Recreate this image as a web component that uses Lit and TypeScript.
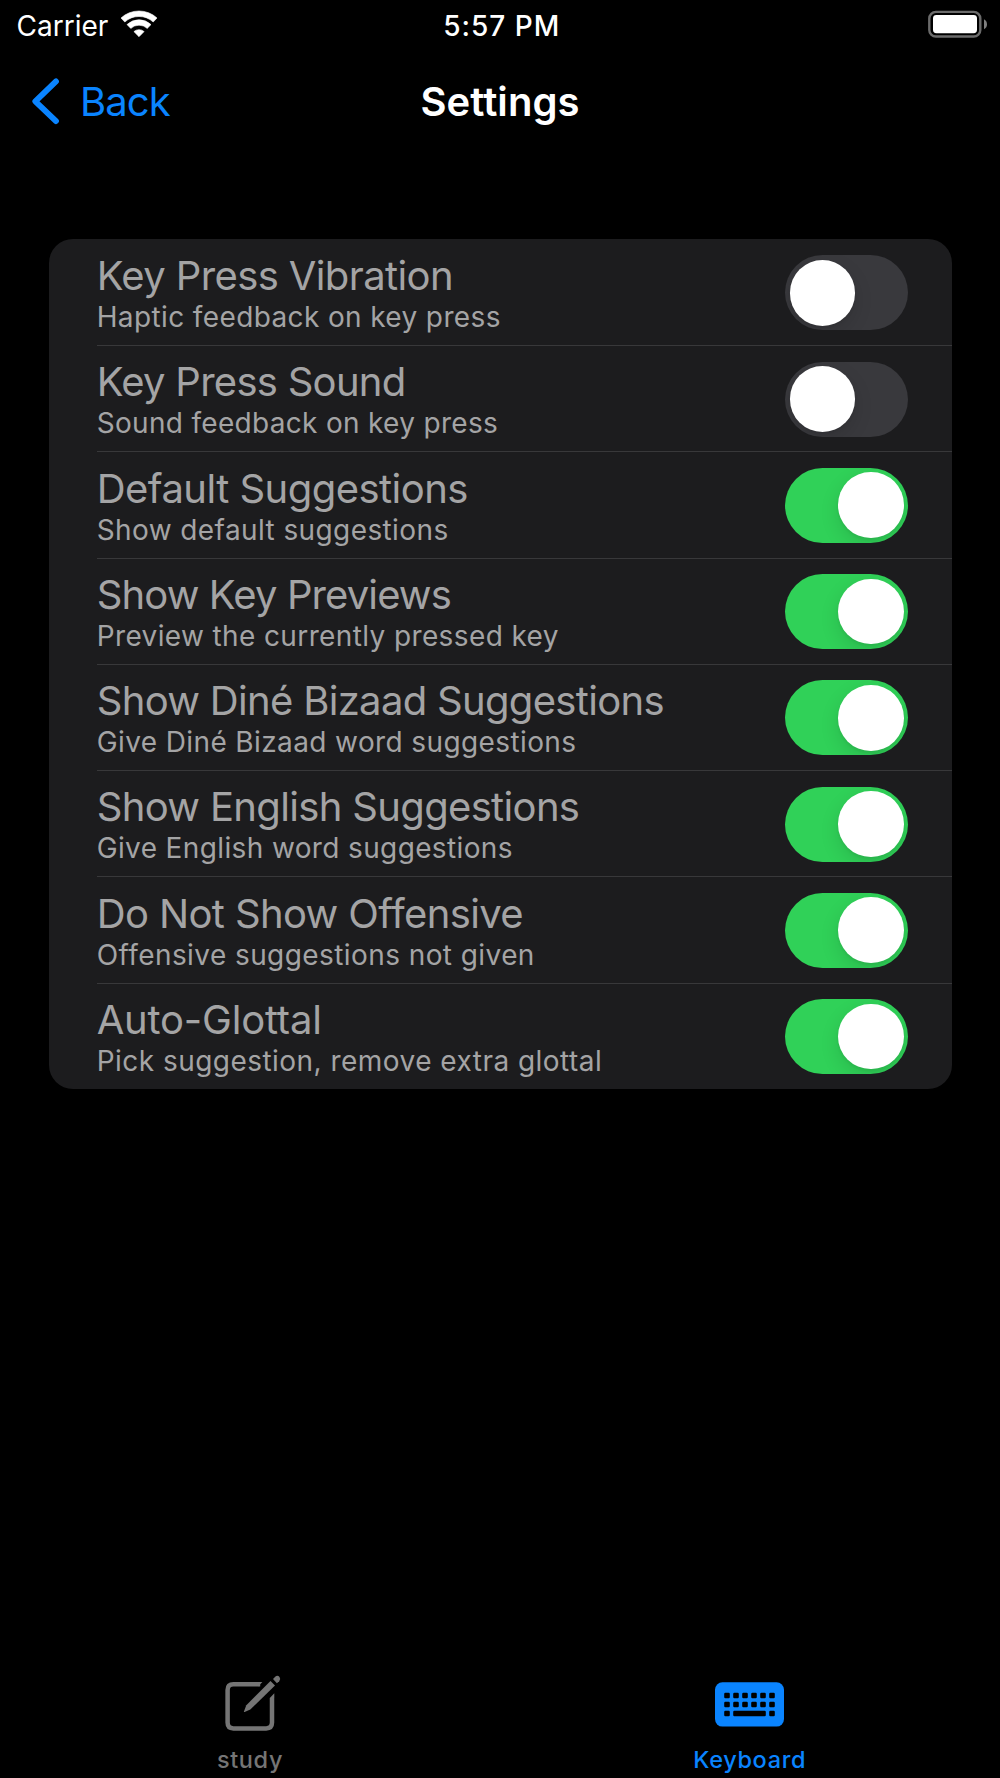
import { LitElement, html, css, svg } from "lit";
import { customElement, property, state } from "lit/decorators.js";
import { classMap } from "lit/directives/class-map.js";
import { styleMap } from "lit/directives/style-map.js";

interface Setting {
  title: string;
  detail: string;
  on: boolean;
  /** Letter tracking in px for the title and the detail line. */
  tracking: [number, number];
}

const SETTINGS: Setting[] = [
  { title: "Key Press Vibration", detail: "Haptic feedback on key press", on: false, tracking: [-0.62, 0.376] },
  { title: "Key Press Sound", detail: "Sound feedback on key press", on: false, tracking: [-0.73, 0.31] },
  { title: "Default Suggestions", detail: "Show default suggestions", on: true, tracking: [-0.54, 0.4] },
  { title: "Show Key Previews", detail: "Preview the currently pressed key", on: true, tracking: [-0.88, 0.378] },
  { title: "Show Diné Bizaad Suggestions", detail: "Give Diné Bizaad word suggestions", on: true, tracking: [-0.68, 0.388] },
  { title: "Show English Suggestions", detail: "Give English word suggestions", on: true, tracking: [-0.66, 0.37] },
  { title: "Do Not Show Offensive", detail: "Offensive suggestions not given", on: true, tracking: [-0.62, 0.42] },
  { title: "Auto-Glottal", detail: "Pick suggestion, remove extra glottal", on: true, tracking: [-0.2, 0.465] },
];

@customElement("ios-switch")
export class IosSwitch extends LitElement {
  static styles = css`
    :host {
      display: block;
      flex: none;
    }
    .track {
      box-sizing: border-box;
      display: flex;
      width: 123.3px;
      height: 75px;
      padding: 4.7px;
      border-radius: 37.5px;
      background: #39393d;
      overflow: hidden;
    }
    .track.on {
      justify-content: flex-end;
      background: #30d158;
    }
    .knob {
      width: 65.6px;
      height: 65.6px;
      border-radius: 50%;
      background: #fff;
      box-shadow: 0 7px 19px rgba(0, 0, 0, 0.12), 0 2px 3px rgba(0, 0, 0, 0.06);
    }
  `;

  @property({ type: Boolean }) checked = false;

  render() {
    return html`<div class=${classMap({ track: true, on: this.checked })}><div class="knob"></div></div>`;
  }
}

@customElement("app-root")
export class AppRoot extends LitElement {
  static styles = css`
    :host {
      display: flex;
      flex-direction: column;
      box-sizing: border-box;
      width: 100%;
      height: 100vh;
      overflow: hidden;
      background: #000;
      color: #fff;
      font-family: Inter, "Liberation Sans", sans-serif;
      font-size: 40px;
      font-variant-ligatures: none;
      font-feature-settings: "calt" 0;
    }
    svg {
      display: block;
      flex: none;
      overflow: visible;
    }
    .status {
      display: grid;
      grid-template-columns: 1fr auto 1fr;
      align-items: center;
      box-sizing: border-box;
      height: 48.3px;
      padding: 4.3px 13px 0 16.6px;
      font-size: 28px;
      line-height: 34px;
    }
    .carrier {
      display: flex;
      align-items: center;
      gap: 10.4px;
    }
    .wifi {
      margin-top: -5px;
    }
    .time {
      font-weight: 500;
      letter-spacing: 1px;
    }
    .battery {
      justify-self: end;
      margin-top: -4px;
    }
    .nav {
      display: grid;
      grid-template-columns: 1fr auto 1fr;
      align-items: center;
      height: 106.3px;
      padding: 0 30px;
      line-height: 48px;
    }
    .back span,
    .heading {
      padding-top: 2px;
    }
    .back {
      display: flex;
      align-items: center;
      gap: 20px;
      color: #0a84ff;
      letter-spacing: -0.9px;
    }
    .heading {
      margin: 0;
      font-size: 40px;
      font-weight: 600;
      letter-spacing: 0.05px;
    }
    .content {
      flex: 1;
      padding: 84.4px 48.3px 0 48.6px;
    }
    .card {
      border-radius: 24px;
      background: #1c1c1e;
      overflow: hidden;
    }
    .row {
      display: flex;
      margin-left: 48.4px;
      height: 106.25px;
      box-sizing: border-box;
      padding: 0.4px 43.5px 0 0;
      align-items: center;
      border-top: 1px solid #38383a;
    }
    .row:first-child {
      border-top-color: transparent;
    }
    .text {
      flex: 1;
      align-self: flex-start;
      margin-left: -0.3px;
      padding-top: 13.8px;
      color: #a4a4a5;
      white-space: nowrap;
    }
    .title {
      line-height: 44px;
    }
    .detail {
      font-size: 28px;
      line-height: 38.5px;
    }
    .tabs {
      display: grid;
      grid-template-columns: 1fr 1fr;
      height: 118.3px;
    }
    .tab {
      display: flex;
      flex-direction: column;
      align-items: center;
      justify-content: flex-end;
      gap: 15.2px;
      padding-bottom: 4px;
      color: #757575;
      font-size: 23.5px;
      font-weight: 500;
      line-height: 28px;
      letter-spacing: 0.65px;
    }
    .tab.active {
      color: #0a84ff;
      padding-right: 0.6px;
    }
  `;

  @state() private settings = SETTINGS;

  private wifi() {
    return html`<svg class="wifi" width="40" height="31" viewBox="118.5 8 40 31" fill="#fff" stroke="#fff" stroke-width="0.6" stroke-linejoin="round">
      <path d="M120.5 18A26.6 26.6 0 0 1 156.5 18L152.7 22A21 21 0 0 0 124.3 22Z" />
      <path d="M126.5 24.6A17.2 17.2 0 0 1 150.5 24.6L146.7 28.4A12 12 0 0 0 130.3 28.4Z" />
      <path d="M133.4 31.6A7.6 7.6 0 0 1 143.6 31.6L138.5 36.7Z" />
    </svg>`;
  }

  private battery() {
    return html`<svg class="battery" width="60" height="28" viewBox="927 10 60 28">
      <rect x="929.3" y="11.9" width="51" height="24.6" rx="6.6" fill="none" stroke="#6b6b6b" stroke-width="2.4" />
      <rect x="933" y="15" width="44" height="18.2" rx="3.4" fill="#fff" />
      <path d="M984 19.3Q987 21 987 24.2Q987 27.6 984 29.2Z" fill="#808080" />
    </svg>`;
  }

  private studyIcon() {
    return html`<svg width="56" height="56" viewBox="222 1675 56 56" fill="none" stroke="currentColor" stroke-width="4.5">
      <path d="M260.2 1684.3H233.4Q227.6 1684.3 227.6 1690V1722.6Q227.6 1728.4 233.4 1728.4H266.2Q272 1728.4 272 1722.6V1697.9" />
      <path d="M258 1686.5L262.4 1682H258ZM269.8 1697.9L274.3 1693.3V1698H269.8Z" fill="currentColor" stroke="none" />
      <path d="M270.5 1681.1L275 1685.6L250.3 1709.6L244.6 1712Q243.6 1712.3 244 1711.2L246.3 1705.2Z" fill="currentColor" stroke="none" />
      <path d="M273 1679.1L275.2 1676.8Q277.4 1674.8 279.5 1676.9Q281.1 1679.1 279.2 1681.2L276.9 1683.2Z" fill="currentColor" stroke="none" />
    </svg>`;
  }

  private keyboardIcon() {
    const keys = [0, 1, 2].flatMap((r) =>
      [0, 1, 2, 3, 4, 5]
        .filter((c) => r < 2 || c === 0 || c === 5)
        .map((c) => svg`<rect x=${9.2 + c * 9} y=${10.5 + r * 9} width="5.6" height="5.6" rx="1.2" />`),
    );
    return html`<svg width="69" height="56" viewBox="0 -7.2 69 56">
      <rect width="69" height="44.4" rx="7.5" fill="currentColor" />
      <g fill="#000">${keys}<rect x="18.2" y="28.5" width="32.6" height="5.6" rx="1.2" /></g>
    </svg>`;
  }

  render() {
    return html`
      <div class="status">
        <div class="carrier"><span>Carrier</span>${this.wifi()}</div>
        <div class="time">5:57 PM</div>
        ${this.battery()}
      </div>
      <div class="nav">
        <div class="back">
          <svg width="30" height="48" viewBox="30 77 30 48" fill="none" stroke="currentColor" stroke-width="5.8" stroke-linecap="round" stroke-linejoin="round">
            <path d="M56 81.4L35.3 101.3L56 121.1" />
          </svg>
          <span>Back</span>
        </div>
        <h1 class="heading">Settings</h1>
      </div>
      <div class="content">
        <div class="card">
          ${this.settings.map(
            (s) => html`<div class="row">
              <div class="text">
                <div class="title" style=${styleMap({ letterSpacing: `${s.tracking[0]}px` })}>${s.title}</div>
                <div class="detail" style=${styleMap({ letterSpacing: `${s.tracking[1]}px` })}>${s.detail}</div>
              </div>
              <ios-switch ?checked=${s.on}></ios-switch>
            </div>`,
          )}
        </div>
      </div>
      <div class="tabs">
        <div class="tab">${this.studyIcon()}<span>study</span></div>
        <div class="tab active">${this.keyboardIcon()}<span>Keyboard</span></div>
      </div>
    `;
  }
}
